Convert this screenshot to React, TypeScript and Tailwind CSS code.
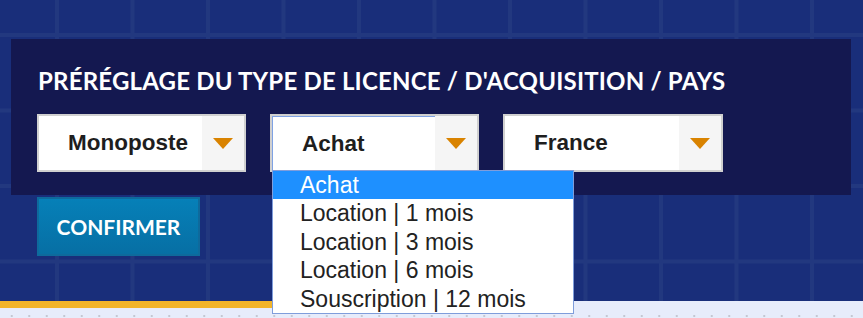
import { useState } from "react";

type SelectProps = {
  value: string;
  focused?: boolean;
  wide?: boolean;
};

const options = ["Achat", "Location | 1 mois", "Location | 3 mois", "Location | 6 mois", "Souscription | 12 mois"];

function FakeSelect({ value, focused, wide }: SelectProps) {
  return (
    <div className={"flex h-[58px] border-2 border-[#d0d0d0] bg-white " + (wide ? "w-[220px]" : "w-[209px]")}>
      <div
        className={
          "flex-1 flex items-center pl-[29px] text-[22.5px] font-bold text-[#1e1e1e] " +
          (focused ? "border-t border-l border-[#7ea2e4]" : "")
        }
        style={{ fontFamily: '"Liberation Sans", Arial, sans-serif' }}
      >
        {value}
      </div>
      <div className="w-[42px] bg-[#f5f5f5] flex items-center justify-center">
        <svg width="20" height="11" viewBox="0 0 20 11">
          <path d="M0 0 L20 0 L10 11 Z" fill="#d98300" />
        </svg>
      </div>
    </div>
  );
}

export default function App() {
  const [selected] = useState("Achat");

  return (
    <div className="relative w-[863px] h-[318px] overflow-hidden bg-[#e7ecfb]">
      {/* grid background */}
      <div className="h-[301px] bg-[#192e7a] bg-[linear-gradient(to_right,#22387f_4px,transparent_4px),linear-gradient(to_bottom,#22387f_4px,transparent_4px)] bg-[length:75.5px_75.5px] bg-[position:55px_33px] pt-[39px] pl-[11px]">
        <div className="w-[840px] h-[156px] bg-[#141850] pl-[27px] pt-[28px]">
          <h2
            className="text-white text-[24px] font-bold tracking-[0.2px] leading-[28px]"
            style={{ fontFamily: 'Lato, "Open Sans", sans-serif' }}
          >
            PRÉRÉGLAGE DU TYPE DE LICENCE / D'ACQUISITION / PAYS
          </h2>
          <div className="flex gap-[24px] mt-[19px] -ml-[1px]">
            <FakeSelect value="Monoposte" />
            <FakeSelect value={selected} focused />
            <FakeSelect value="France" wide />
          </div>
        </div>
        <button
          className="mt-[2px] ml-[26px] w-[163px] h-[59px] border-2 border-[#0e6a9c] bg-[linear-gradient(to_bottom,#0680b8,#076fa4)] text-white text-[21px] font-bold"
          style={{ fontFamily: 'Lato, "Open Sans", sans-serif' }}
        >
          CONFIRMER
        </button>
      </div>

      {/* bottom strip */}
      <div className="w-[420px] h-[7px] bg-[#f2b42a]" />
      <div className="absolute left-0 bottom-[1px] w-full h-[2px] bg-[radial-gradient(circle,#c4c7d2_1px,transparent_1.2px)] bg-[length:17.5px_2px] bg-[position:3px_0]" />

      {/* open dropdown list */}
      <ul
        className="absolute left-[272px] top-[170px] w-[302px] h-[144px] border border-[#7f9ddb] bg-white text-[23px] text-[#222]"
        style={{ fontFamily: '"Liberation Sans", Arial, sans-serif' }}
      >
        {options.map((o) => (
          <li
            key={o}
            className={
              "h-[28.4px] leading-[28px] pl-[27px] " +
              (o === selected ? "bg-[#1e90ff] text-white" : "")
            }
          >
            {o}
          </li>
        ))}
      </ul>
    </div>
  );
}
